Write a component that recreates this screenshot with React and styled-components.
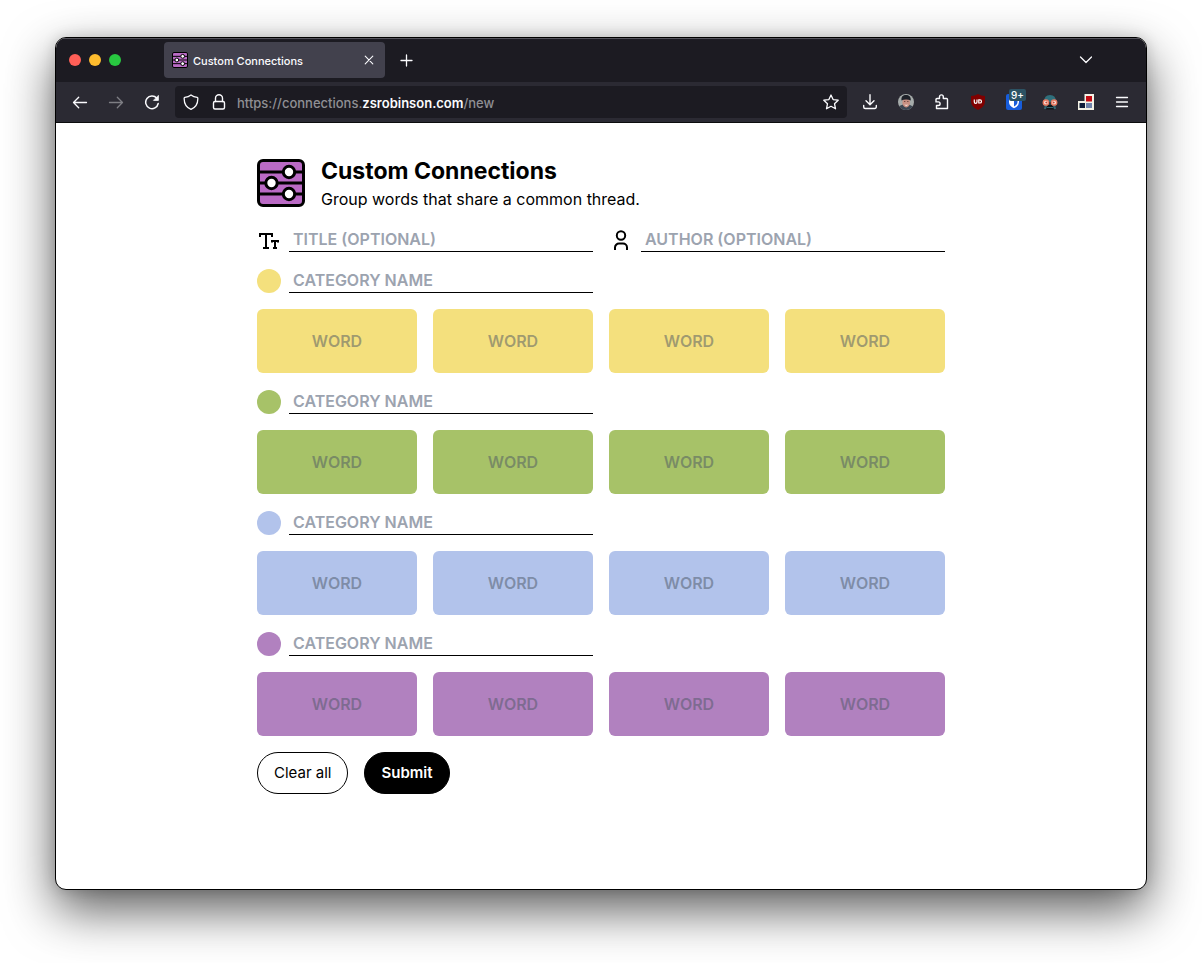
import React from "react";
import styled, { createGlobalStyle } from "styled-components";

const GlobalStyle = createGlobalStyle`
  *, *::before, *::after { box-sizing: border-box; }
  body {
    margin: 0;
    background: #fff;
    color: #000;
    font-family: Inter, "Liberation Sans", sans-serif;
    font-size: 16px;
    line-height: 24px;
  }
  h1, p { margin: 0; }
  button, input { font: inherit; color: inherit; }
`;

const Desktop = styled.div`
  display: flex;
  min-height: 100vh;
  padding: 37px 55px 73px;
`;

const BrowserWindow = styled.div`
  display: flex;
  flex-direction: column;
  flex: 1;
  min-width: 0;
  border: 1px solid #000;
  border-radius: 11px;
  overflow: hidden;
  background: #fff;
  box-shadow: 0 20px 50px rgba(0, 0, 0, 0.64), 0 0 14px rgba(0, 0, 0, 0.15);
`;

const TabBar = styled.div`
  display: flex;
  align-items: center;
  height: 44px;
  padding: 0 42px 0 13px;
  background: #1c1b22;
  box-shadow: inset 0 1px 0 #55545c;
`;

const Lights = styled.div`
  display: flex;
  gap: 8px;
  margin-right: 43px;
`;

const Light = styled.button`
  width: 12px;
  height: 12px;
  padding: 0;
  border: 0;
  border-radius: 50%;
  background: ${(p) => p.$color};
`;

const Tab = styled.div`
  display: flex;
  align-items: center;
  width: 221px;
  height: 36px;
  padding: 0 8px;
  border-radius: 4px;
  background: #42414d;
  color: #fbfbfe;
  font-size: 11px;
  font-weight: 500;
  line-height: 16px;
`;

const TabTitle = styled.span`
  flex: 1;
  margin-left: 5px;
  padding-top: 2px;
  white-space: nowrap;
`;

const IconButton = styled.button`
  display: flex;
  align-items: center;
  justify-content: center;
  flex: none;
  width: ${(p) => p.$width || 36}px;
  height: ${(p) => p.$height || 32}px;
  padding: 0;
  border: 0;
  background: none;
  color: #fbfbfe;
  opacity: ${(p) => (p.disabled ? 0.4 : 1)};
`;

const Spacer = styled.div`
  flex: 1;
`;

const Toolbar = styled.div`
  display: flex;
  align-items: center;
  height: 41px;
  padding: 0 6px;
  border-bottom: 1px solid #0c0c0d;
  background: #2b2a33;
`;

const UrlBar = styled.div`
  display: flex;
  align-items: center;
  flex: 1;
  min-width: 0;
  height: 32px;
  margin: 0 5px;
  padding: 0 2px;
  border-radius: 4px;
  background: #1c1b22;
`;

const Address = styled.div`
  flex: 1;
  min-width: 0;
  margin-left: 4px;
  padding-top: 2px;
  overflow: hidden;
  color: #8f8f94;
  font-size: 13px;
  font-weight: 500;
  line-height: 20px;
  white-space: nowrap;
  strong { color: #fbfbfe; font-weight: 600; }
`;

const Extension = styled.span`
  position: relative;
  display: flex;
`;

const Badge = styled.span`
  position: absolute;
  top: -5px;
  right: -4px;
  padding: 0 2px;
  border-radius: 2px;
  background: #2c5364;
  color: #fff;
  font-size: 10px;
  font-weight: 500;
  line-height: 12px;
`;

const Page = styled.main`
  display: flex;
  flex-direction: column;
  gap: 16px;
  width: 100%;
  max-width: 720px;
  margin: 0 auto;
  padding: 32px 16px;
`;

const Header = styled.header`
  display: flex;
  align-items: center;
  gap: 16px;
`;

const Heading = styled.h1`
  font-size: 23px;
  font-weight: 700;
  line-height: 32px;
`;

const Form = styled.form`
  display: flex;
  flex-direction: column;
  gap: 16px;
`;

const FieldRow = styled.div`
  display: grid;
  grid-template-columns: 1fr 1fr;
  gap: 16px;
`;

const Field = styled.label`
  display: flex;
  align-items: center;
  gap: 8px;
`;

const Dot = styled.span`
  flex: none;
  width: 24px;
  height: 24px;
  border-radius: 50%;
  background: ${(p) => p.$color};
`;

const TextInput = styled.input`
  flex: 1;
  min-width: 0;
  height: 25px;
  padding: 0 4px;
  border: 0;
  border-bottom: 1px solid #000;
  border-radius: 0;
  outline: 0;
  background: none;
  font-weight: 600;
  text-transform: uppercase;
  &::placeholder { color: #9ca3af; opacity: 1; }
`;

const WordGrid = styled.div`
  display: grid;
  grid-template-columns: repeat(4, 1fr);
  gap: 16px;
`;

const WordInput = styled.input`
  min-width: 0;
  width: 100%;
  height: 64px;
  padding: 0 8px;
  border: 0;
  border-radius: 6px;
  outline: 0;
  background: ${(p) => p.$color};
  font-weight: 600;
  text-align: center;
  text-transform: uppercase;
  &::placeholder { color: rgba(75, 85, 99, 0.5); opacity: 1; }
`;

const Actions = styled.div`
  display: flex;
  gap: 16px;
`;

const PillButton = styled.button`
  height: 42px;
  padding: 0 16px;
  border: 1px solid #000;
  border-radius: 21px;
  background: ${(p) => (p.$primary ? "#000" : "#fff")};
  color: ${(p) => (p.$primary ? "#fff" : "#000")};
  font-size: 15px;
  font-weight: ${(p) => (p.$primary ? 600 : 400)};
`;

function Stroke({ size = 16, box = 16, width = 1.3, cap = "round", children }) {
  return (
    <svg width={size} height={size} viewBox={`0 0 ${box} ${box}`} fill="none" stroke="currentColor" strokeWidth={width} strokeLinecap={cap} strokeLinejoin={cap === "round" ? "round" : "miter"} aria-hidden="true">
      {children}
    </svg>
  );
}

function Logo({ size }) {
  return (
    <svg width={size} height={size} viewBox="0 0 48 48" aria-hidden="true">
      <rect x="1.5" y="1.5" width="45" height="45" rx="4.5" fill="#ba6ac5" stroke="#000" strokeWidth="3" />
      <path d="M1 13H47M1 24H47M1 35H47" stroke="#000" strokeWidth="3" />
      <g fill="#fff" stroke="#000" strokeWidth="3">
        <circle cx="32" cy="13" r="5.7" />
        <circle cx="14.500" cy="24" r="5.7" />
        <circle cx="32" cy="35" r="5.7" />
      </g>
    </svg>
  );
}

const categories = [
  { name: "Yellow", color: "#f4e07d" },
  { name: "Green", color: "#a7c268" },
  { name: "Blue", color: "#b2c3eb" },
  { name: "Purple", color: "#b181bf" },
];

function BrowserChrome() {
  return (
    <>
      <TabBar>
        <Lights>
          <Light $color="#ff5f57" aria-label="Close window" />
          <Light $color="#febc2e" aria-label="Minimize window" />
          <Light $color="#28c840" aria-label="Zoom window" />
        </Lights>
        <Tab>
          <Logo size={16} />
          <TabTitle>Custom Connections</TabTitle>
          <IconButton $width={16} $height={16} aria-label="Close tab">
            <Stroke width={1.1}><path d="M4.200 4.200L11.800 11.800M11.800 4.200L4.200 11.800" /></Stroke>
          </IconButton>
        </Tab>
        <IconButton $width={44} aria-label="New tab">
          <Stroke><path d="M7.500 3V14M2 8.500H13" /></Stroke>
        </IconButton>
        <Spacer />
        <IconButton aria-label="List all tabs">
          <Stroke><path d="M2.500 5L8 10.500L13.500 5" /></Stroke>
        </IconButton>
      </TabBar>
      <Toolbar>
        <IconButton aria-label="Back"><Stroke><path d="M14.500 8.500H1.500M6.700 3.300L1.500 8.500L6.700 13.700" /></Stroke></IconButton>
        <IconButton aria-label="Forward" disabled><Stroke><path d="M1.500 8.500H14.500M9.300 3.300L14.500 8.500L9.300 13.700" /></Stroke></IconButton>
        <IconButton aria-label="Reload">
          <Stroke width={1.5}>
            <path d="M12.800 4.200A6.300 6.300 0 1 0 14.200 9.500" />
            <path d="M14.400 1.800V6.400H9.800Z" fill="currentColor" strokeWidth="0.8" />
          </Stroke>
        </IconButton>
        <UrlBar>
          <IconButton $width={28} aria-label="Tracking protection">
            <Stroke><path d="M8 .9Q10.500 2.800 14.200 3.300Q15 3.500 14.800 5C14.800 10 12.500 13.500 8 15.400C3.500 13.500 1.200 10 1.200 5Q1 3.500 1.800 3.300Q5.500 2.800 8 .9Z" /></Stroke>
          </IconButton>
          <IconButton $width={28} aria-label="Site information">
            <Stroke width={1.4}>
              <rect x="2.500" y="7.500" width="11" height="7.500" rx="1.500" />
              <path d="M4.500 7.500V4.300A3.500 3.500 0 0 1 11.500 4.300V7.500" />
            </Stroke>
          </IconButton>
          <Address role="textbox" aria-label="Address" tabIndex={0}>
            https://connections.<strong>zsrobinson.com</strong>/new
          </Address>
          <IconButton $width={28} aria-label="Bookmark this page">
            <Stroke><path d="M8 1L10.100 5.600L15.200 6.200L11.500 9.700L12.500 14.800L8 12.300L3.500 14.800L4.500 9.700L.8 6.200L5.900 5.600Z" /></Stroke>
          </IconButton>
        </UrlBar>
        <IconButton aria-label="Downloads">
          <Stroke width={1.4}><path d="M8 .8V10.500M4 6.700L8 10.700L12 6.700M1.700 11.500V13A1.500 1.500 0 0 0 3.200 14.500H12.800A1.500 1.500 0 0 0 14.300 13V11.500" /></Stroke>
        </IconButton>
        <IconButton aria-label="Account">
          <svg width="16" height="16" viewBox="0 0 16 16" aria-hidden="true">
            <clipPath id="avatar"><circle cx="8" cy="8" r="8" /></clipPath>
            <g clipPath="url(#avatar)">
              <rect width="16" height="16" fill="#a5abaa" />
              <path d="M0 16V12.500L5 10.500H11L16 13V16Z" fill="#3c4652" />
              <ellipse cx="8.200" cy="8.500" rx="3.800" ry="5" fill="#c99183" />
              <path d="M3.500 6.500C3 2.500 5 1 8 1S13 2.500 12.800 6.500C10 5 6 5 3.500 6.500Z" fill="#1d2028" />
              <path d="M6.200 7.500H7.300M9.300 7.500H10.400" stroke="#5b3a35" />
              <path d="M6.400 10.200Q8.200 11.200 10.200 10.200Q9.500 12 8.300 12Q7 12 6.400 10.200Z" fill="#f2dfd9" />
            </g>
          </svg>
        </IconButton>
        <IconButton aria-label="Extensions">
          <Stroke width={1.4}><path d="M5.500 4.500V2.800A1.900 1.900 0 0 1 9.300 2.800V4.500H12.500A1 1 0 0 1 13.500 5.500V14.500H2.500V11.500H4.300A1.800 1.800 0 0 0 4.300 7.900H2V5.500A1 1 0 0 1 3 4.500Z" /></Stroke>
        </IconButton>
        <IconButton aria-label="uBlock Origin">
          <svg width="16" height="16" viewBox="0 0 16 16" aria-hidden="true">
            <path d="M8 0Q11 2 15 2V7Q15 13 8 16Q1 13 1 7V2Q5 2 8 0Z" fill="#800000" />
            <path d="M4.300 5.500V8A1.300 1.300 0 0 0 7 8V5.500" fill="none" stroke="#fff" strokeWidth="1.200" />
            <path d="M8.800 5.800V9H9.900A1.600 1.600 0 0 0 9.900 5.800Z" fill="none" stroke="#fff" strokeWidth="1.200" />
          </svg>
        </IconButton>
        <IconButton aria-label="Bitwarden">
          <Extension>
            <svg width="16" height="16" viewBox="0 0 16 16" aria-hidden="true">
              <rect width="16" height="16" rx="2" fill="#175ddc" />
              <path d="M3 2.500H13V8Q13 12 8 14.300Q3 12 3 8Z" fill="#fff" />
              <path d="M8 4H11.500V8Q11.500 10.700 8 12.500Z" fill="#175ddc" />
            </svg>
            <Badge>9+</Badge>
          </Extension>
        </IconButton>
        <IconButton aria-label="Goggles extension">
          <svg width="16" height="16" viewBox="0 0 16 16" aria-hidden="true">
            <path d="M2 8Q2 1 8 1T14 8Z" fill="#2f6f7c" />
            <path d="M3 10H13L14 15H2Z" fill="#356671" />
            <path d="M5.500 10.500H10.500L12 15.500H4Z" fill="#101418" />
            <path d="M5 13.500H11" stroke="#356671" />
            <circle cx="3.900" cy="8.500" r="2.600" fill="#fbeee6" stroke="#ea7a60" strokeWidth="1.500" />
            <circle cx="12.100" cy="8.500" r="2.600" fill="#fbeee6" stroke="#ea7a60" strokeWidth="1.500" />
            <circle cx="4.300" cy="8.500" r="1" fill="#c2453a" />
            <circle cx="11.700" cy="8.500" r="1" fill="#c2453a" />
          </svg>
        </IconButton>
        <IconButton aria-label="Blocks extension">
          <svg width="16" height="16" viewBox="0 0 16 16" aria-hidden="true">
            <path d="M6.500 0H16V16H0V7H6.500Z" fill="#f4f2e6" />
            <rect x="8" y="2" width="6" height="5.500" fill="#c20a12" />
            <rect x="1.500" y="9" width="5.500" height="5" fill="#0e1c38" />
            <rect x="8" y="9" width="6" height="5" fill="#7184ac" />
          </svg>
        </IconButton>
        <IconButton aria-label="Open menu">
          <Stroke><path d="M2.500 3.500H13.500M2.500 8H13.500M2.500 12.500H13.500" /></Stroke>
        </IconButton>
      </Toolbar>
    </>
  );
}

export default function App() {
  return (
    <>
      <GlobalStyle />
      <Desktop>
        <BrowserWindow>
          <BrowserChrome />
          <Page>
            <Header>
              <Logo size={48} />
              <div>
                <Heading>Custom Connections</Heading>
                <p>Group words that share a common thread.</p>
              </div>
            </Header>
            <Form>
              <FieldRow>
                <Field>
                  <Stroke size={24} box={24} width={2} cap="butt">
                    <path d="M3 9V6H15V9M9 6V20M6 20H12M15 14.500V13H21V14.500M18 13V20M16 20H20" />
                  </Stroke>
                  <TextInput aria-label="Title" placeholder="Title (optional)" />
                </Field>
                <Field>
                  <Stroke size={24} box={24} width={2} cap="butt">
                    <circle cx="12" cy="7.500" r="4.200" />
                    <path d="M6 22V19.500A4 4 0 0 1 10 15.500H14A4 4 0 0 1 18 19.500V22" />
                  </Stroke>
                  <TextInput aria-label="Author" placeholder="Author (optional)" />
                </Field>
              </FieldRow>
              {categories.map((category) => (
                <React.Fragment key={category.name}>
                  <FieldRow>
                    <Field>
                      <Dot $color={category.color} />
                      <TextInput aria-label={`${category.name} category name`} placeholder="Category name" />
                    </Field>
                  </FieldRow>
                  <WordGrid>
                    {[1, 2, 3, 4].map((n) => (
                      <WordInput key={n} $color={category.color} aria-label={`${category.name} word ${n}`} placeholder="Word" />
                    ))}
                  </WordGrid>
                </React.Fragment>
              ))}
              <Actions>
                <PillButton type="reset">Clear all</PillButton>
                <PillButton type="button" $primary>Submit</PillButton>
              </Actions>
            </Form>
          </Page>
        </BrowserWindow>
      </Desktop>
    </>
  );
}
